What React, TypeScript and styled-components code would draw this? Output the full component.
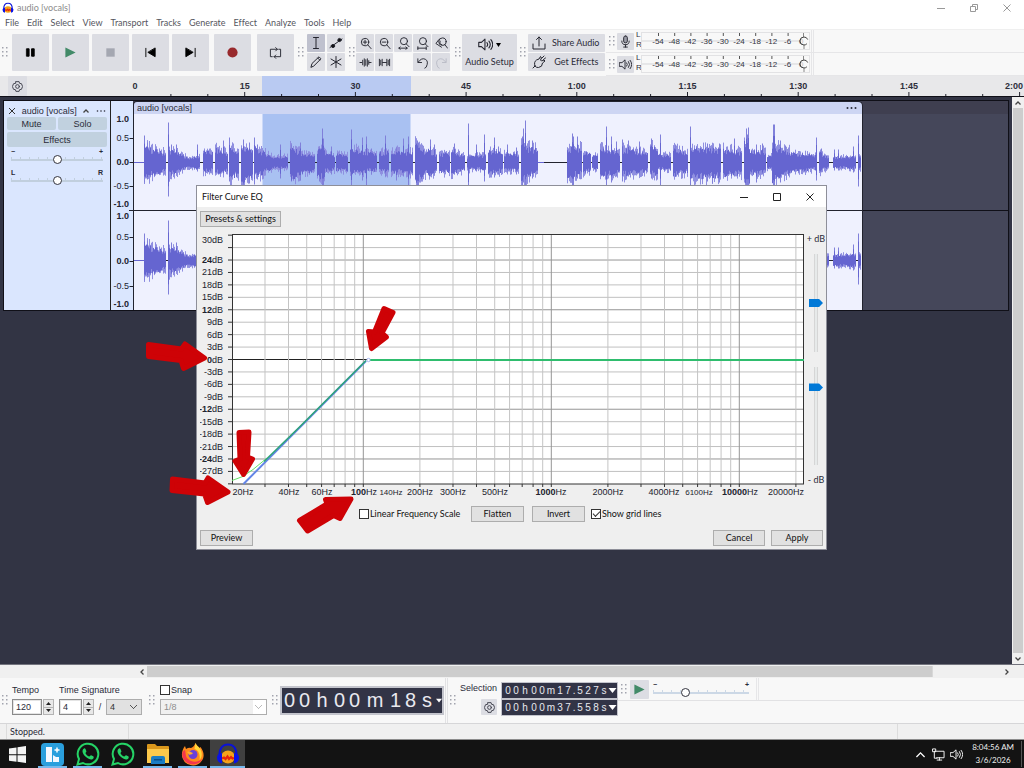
import React from "react";
import styled, { createGlobalStyle, css } from "styled-components";

const sans = `"Liberation Sans", Arial, sans-serif`;
const ui = `Lato, "Open Sans", sans-serif`;

const GlobalStyle = createGlobalStyle`
  * { box-sizing: border-box; }
  body { margin: 0; background: #323444; overflow: hidden; font-variant-ligatures: none; }
  button, input, select { font: inherit; font-variant-ligatures: none; color: inherit; margin: 0; padding: 0; }
  svg { display: block; flex: none; }
`;

/* ---------- shell ---------- */
const Desktop = styled.div`
  position: relative;
  display: flex;
  flex-direction: column;
  height: 100vh;
  font: 9px/12px ${ui};
  font-variant-ligatures: none;
  color: #2a2b38;
`;
const TitleBar = styled.header`
  display: flex;
  align-items: center;
  height: 16px;
  gap: 3px;
  padding: 0 1px 0 2px;
  background: #fff;
  color: #8b8b8b;
`;
const WindowTitle = styled.h1`
  flex: 1;
  margin: 0;
  font-size: 9px;
  font-weight: 400;
`;
const CaptionButtons = styled.div`
  display: flex;
`;
const CaptionButton = styled.button`
  display: grid;
  place-items: center;
  width: 33px;
  height: 16px;
  border: 0;
  background: none;
`;
const MenuBar = styled.nav`
  display: flex;
  gap: 8px;
  height: 13px;
  padding-left: 5px;
  background: #fff;
  color: #55565e;
`;
const MenuItem = styled.a`
  color: inherit;
  text-decoration: none;
  line-height: 14px;
`;

/* ---------- toolbars ---------- */
const ToolBar = styled.div`
  display: flex;
  height: 47px;
  background: #f8f8f8;
  box-shadow: inset 0 1px #efefef;
`;
const ToolGroup = styled.div<{ $gap?: number; $pad?: number }>`
  display: flex;
  align-items: center;
  gap: ${(p) => p.$gap ?? 0}px;
  padding-right: ${(p) => p.$pad ?? 0}px;
`;
const ToolButton = styled.button<{ $w?: number; $h?: number; $on?: boolean; $lead?: number }>`
  display: flex;
  align-items: center;
  justify-content: center;
  flex: none;
  width: ${(p) => p.$w ?? 18}px;
  height: ${(p) => p.$h ?? 18}px;
  margin-left: ${(p) => p.$lead ?? 0}px;
  border: 0;
  border-radius: 1px;
  background: ${(p) => (p.$on ? "#bfc1ce" : "#dcdde3")};
`;
const StackButton = styled(ToolButton)`
  flex-direction: column;
  gap: 4px;
`;
const WideButton = styled(ToolButton)`
  justify-content: flex-start;
  gap: 6px;
  padding-left: 4px;
`;
const ButtonGrid = styled.div<{ $cols: number; $gap: number }>`
  display: grid;
  grid-template-columns: repeat(${(p) => p.$cols}, 18px);
  gap: 1px ${(p) => p.$gap}px;
  padding-right: 3px;
`;
const Column = styled.div`
  display: flex;
  flex-direction: column;
  gap: 1px;
`;
const MeterPanel = styled.div`
  display: flex;
  flex: 1;
  flex-direction: column;
  padding-top: 1px;
`;
const MeterRow = styled.div`
  display: flex;
  align-items: center;
  flex: 1;
  border-bottom: 1px solid #e6e6e8;
`;
const MeterEnd = styled.div`
  align-self: stretch;
  width: 3px;
  border: solid #e6e6e8;
  border-width: 0 1px;
  margin-left: 1px;
`;
const GripBox = styled.span<{ $w?: number }>`
  display: grid;
  place-items: center;
  flex: none;
  width: ${(p) => p.$w ?? 10}px;
`;
const Grip = ({ w }: { w?: number }) => (
  <GripBox $w={w}>
    <svg width="6" height="11" fill="#a2a4ae">
      {[0, 4].map((x) => [0, 4, 8].map((y) => <rect key={`${x}${y}`} x={x} y={y} width="1.5" height="1.5" />))}
    </svg>
  </GripBox>
);

/* ---------- icons ---------- */
const Icon = ({ size = 14, children, fill = "none", stroke = "#24252f", sw = 1 }: {
  size?: number; children: React.ReactNode; fill?: string; stroke?: string; sw?: number;
}) => (
  <svg width={size} height={size} viewBox="0 0 14 14" fill={fill} stroke={stroke} strokeWidth={sw} strokeLinecap="round" strokeLinejoin="round">
    {children}
  </svg>
);
const Gear = () => (
  <Icon size={11} sw={1.2} stroke="#40414c">
    <path d="M5 .8h4l.7 2.200 2.300.4 1.500 3.600-1.500 3.600-2.300.4-.7 2.200H5L4.300 11 2 10.600.5 7 2 3.400 4.300 3z" />
    <circle cx="7" cy="7" r="2.400" />
  </Icon>
);
const Lens = () => (<><circle cx="6.500" cy="5.500" r="4" /><path d="M9.500 8.500l3.500 4" /></>);
const Speaker = ({ size = 14, stroke }: { size?: number; stroke?: string }) => (
  <Icon size={size} stroke={stroke}>
    <path d="M.7 5h2.500L6.500 2v10L3.200 9H.7zM8.300 5.200q1.400 1.800 0 3.600M10.200 3.800q2.500 3.200 0 6.400M12 2.500q3.500 4.500 0 9" />
  </Icon>
);
const AudacityLogo = ({ size }: { size: number }) => (
  <svg width={size} height={size} viewBox="0 0 24 24">
    <path d="M3.500 13C3.500 6 7 2.500 12 2.500S20.500 6 20.500 13" fill="none" stroke="#0a12d8" strokeWidth="2.200" />
    <ellipse cx="12" cy="15" rx="7" ry="6.500" fill="#f5a21a" />
    <path d="M6 16.500l2-1 1.500 1.500 2-2.500 1.500 2.500 2-2 1.500 1.500 1.500-.5" fill="none" stroke="#e8240c" strokeWidth="2.200" />
    <path d="M1 15.500q0-4 5-4.500v10.500q-5-1-5-6zM23 15.500q0-4-5-4.500v10.500q5-1 5-6z" fill="#0a12e8" />
  </svg>
);

const editTools = [
  { name: "Selection tool", on: true, art: <path d="M4.500 1.500h5M7 1.500v11M4.500 12.500h5" /> },
  { name: "Envelope tool", art: <><path d="M1 11.500L13 3M2 10l3 .5M9 4.500l3-.5" /><circle cx="4" cy="10" r="1.600" fill="#111" /><circle cx="10.500" cy="4" r="1.600" fill="#111" /></> },
  { name: "Draw tool", art: <path d="M2 12l1-3.500L10 1.800l2 2-7 7zM8.700 3l2 2" /> },
  { name: "Multi-tool", art: <path d="M7 1.500v11M2 4l10 6M12 4L2 10" /> },
];
const zoomTools = [
  { name: "Zoom in", art: <><Lens /><path d="M4.500 5.500h4M6.500 3.500v4" /></> },
  { name: "Zoom out", art: <><Lens /><path d="M4.500 5.500h4" /></> },
  { name: "Fit selection", art: <><circle cx="7.500" cy="4.500" r="3.800" /><path d="M10 7.500l3 3M2 12h9M3.500 10.700L2 12l1.500 1.300M9.500 10.700L11 12l-1.500 1.300" /></> },
  { name: "Fit project", art: <><circle cx="7.500" cy="4.500" r="3.800" /><path d="M10 7.500l3 3M2 12h9M2 10.500v3M11 10.500v3" /></> },
  { name: "Zoom toggle", art: <><circle cx="8" cy="5" r="4" /><path d="M10.500 8l3 4M4 3L1 7l6 4M5.500 4.500q-1 3 2 4" /></> },
  { name: "Trim", art: <path d="M1 7h2M11 7h2M4 4.500v5M5.700 3v8M7.300 4v6M9 3v8M10.500 5v4" /> },
  { name: "Silence", art: <path d="M5 7h4M1.500 3.500v7M3 4.500v5M4.500 3.500v7M9.500 3.500v7M11 4.500v5M12.500 3.500v7" /> },
  null,
  { name: "Undo", art: <path d="M2 3v4h4M2.500 6.500Q6 1.500 10 3.500t1 8.500l-1.500 1" /> },
  { name: "Redo", off: true, art: <path d="M12 3v4H8M11.500 6.500Q8 1.500 4 3.500t-1 8.500l1.500 1" /> },
];
const transport = [
  { name: "Pause", art: <path d="M3 3h2.500v8H3zM8.500 3H11v8H8.500z" fill="#000" stroke="#000" /> },
  { name: "Play", art: <path d="M1.500 1.500v11l11-5.500z" fill="#428a68" stroke="none" /> },
  { name: "Stop", art: <path d="M2.500 2.500h9v9h-9z" fill="#a4a7b1" stroke="none" /> },
  { name: "Skip to start", art: <path d="M2 2.500v9M12 2.500v9L4.500 7z" fill="#000" stroke="#000" /> },
  { name: "Skip to end", art: <path d="M12 2.500v9M2 2.500v9L9.500 7z" fill="#000" stroke="#000" /> },
  { name: "Record", lead: 2, art: <circle cx="7" cy="7" r="5.500" fill="#98292d" stroke="none" /> },
  { name: "Loop", lead: 3, art: <path d="M3.500 11.500h-2v-8H9M7.200 1.700L9 3.500 7.200 5.300M10.500 3.500h2v8H5.500M7.300 9.700L5.500 11.500l1.800 1.800" /> },
];

/* ---------- level meters ---------- */
const Meter = ({ name, children }: { name: string; children: React.ReactNode }) => (
  <MeterRow>
    <Grip w={11} />
    <ToolButton aria-label={name} $h={17} $w={17}>{children}</ToolButton>
    <svg width="176" height="22" fontFamily={sans} fontSize="8" fill="#33343f">
      <text x="2" y="7">L</text>
      <text x="2" y="17">R</text>
      <rect x="7.500" y="2.500" width="168" height="17" fill="none" stroke="#e2e2e4" />
      <path d="M8 11h160" stroke="#d5d5d8" />
      {[-54, -48, -42, -36, -30, -24, -18, -12, -6].map((v, i) => (
        <g key={v}>
          <path d={`M${24.500 + i * 16.200} 3v3`} stroke="#555" />
          <text x={24 + i * 16.200} y="14" textAnchor="middle">{v}</text>
        </g>
      ))}
      <text x="165" y="14">0</text>
      <path d="M169.500 3v4M170 15v4" stroke="#888" />
      <circle cx="170" cy="11" r="4" fill="#f8f8f8" fillOpacity=".7" stroke="#444" strokeDasharray="20 6" strokeDashoffset="-3" />
    </svg>
    <MeterEnd />
  </MeterRow>
);

/* ---------- time ruler ---------- */
const RulerRow = styled.div`
  display: flex;
  height: 21px;
  padding-left: 8px;
  background: #e8e8ea;
  border-bottom: 1px solid #101018;
`;
const RulerScale = styled.svg`
  flex: 1;
  min-width: 0;
  width: 0;
`;
const STEP = 36.9;
const timeLabels = ["0", "15", "30", "45", "1:00", "1:15", "1:30", "1:45"];
const TimeRuler = () => (
  <RulerRow>
    <ToolButton aria-label="Timeline options" $w={19} $h={20}><Gear /></ToolButton>
    <RulerScale height="20" fontFamily={sans} fontSize="9" fontWeight="700" fill="#2e2f3c">
      <rect x="235" width="149" height="20" fill="#b9caf2" />
      {Array.from({ length: 24 }, (_, i) => (
        <path key={i} d={`M${107 + (i + 1) * STEP} ${(i + 1) % 3 ? 18 : 16}v4`} stroke="#22232e" />
      ))}
      {timeLabels.map((t, i) => (
        <text key={t} x={i ? 107 + i * STEP * 3 : 108} y="13" textAnchor="middle">{t}</text>
      ))}
      <text x="996" y="13" textAnchor="end">2:00</text>
    </RulerScale>
  </RulerRow>
);

/* ---------- tracks ---------- */
const Workspace = styled.main`
  display: flex;
  flex: 1;
  min-height: 0;
  background: #323444;
`;
const TrackList = styled.div`
  flex: 1;
  min-width: 0;
  padding: 3px 3px 0;
`;
const Track = styled.section`
  display: flex;
  border: 1px solid #101018;
  height: 211px;
`;
const TrackPanel = styled.div`
  width: 107px;
  flex: none;
  padding: 3px 3px 0;
  background: #dae6fe;
  border-right: 1px solid #222;
  font: 9px/12px ${sans};
`;
const PanelTitle = styled.div`
  display: flex;
  align-items: center;
  justify-content: space-between;
  height: 13px;
  padding: 0 1px;
`;
const PanelRow = styled.div`
  display: flex;
  gap: 2px;
  margin-bottom: 2px;
`;
const PanelButton = styled.button<{ $h: number }>`
  flex: 1;
  height: ${(p) => p.$h}px;
  border: 0;
  border-radius: 2px;
  background: #c1d1df;
`;
const KnobLabels = styled.span`
  display: flex;
  justify-content: space-between;
  height: 6px;
  padding: 0 4px;
  font: 700 7px/6px ${sans};
`;
const Knob = styled.label`
  display: block;
  height: 21px;
`;
const Range = styled.input<{ $line: string }>`
  appearance: none;
  display: block;
  width: calc(100% - 8px);
  height: 9px;
  margin: 0 4px;
  background: linear-gradient(${(p) => p.$line}, ${(p) => p.$line}) 0 4px / 100% 2px no-repeat,
    repeating-linear-gradient(90deg, ${(p) => p.$line} 0 1px, transparent 1px 9px) 0 2px / 100% 2px no-repeat;
  &::-webkit-slider-thumb {
    appearance: none;
    width: 9px;
    height: 9px;
    border: 1px solid #33343f;
    border-radius: 50%;
    background: #fff;
  }
`;
const ClipArea = styled.div`
  flex: 1;
  min-width: 0;
  background: linear-gradient(#101018, #101018) 0 109px / 100% 1px no-repeat,
    linear-gradient(#3f3f50 13px, #45475a 13px);
`;
const Clip = styled.div`
  width: 730px;
  border: 1px solid #22232e;
  border-width: 1px 1px 0;
  border-radius: 4px 5px 0 0;
  overflow: hidden;
`;
const ClipHeader = styled.div`
  display: flex;
  justify-content: space-between;
  height: 12px;
  padding: 0 5px 0 3px;
  background: #cdd5f3;
  font: 9px/12px ${sans};
`;
const LowerChannel = styled.div`
  border-top: 1px solid #22232e;
`;
const Dots = ({ w = 11, r = 1 }: { w?: number; r?: number }) => (
  <svg width={w} height="11" fill="#2a2b38">
    {[0, 1, 2].map((i) => <circle key={i} cx={1.500 + i * (w - 3) / 2} cy="6" r={r} />)}
  </svg>
);

/* voiced passages: start, end, height above and below the axis at the start, then at the end */
const phrases = [
  [144, 166, 15, 15, 9, 8], [168, 187, 13, 13, 5, 5], [187, 200, 4, 5, 6, 6], [203, 213, 11, 9, 10, 8],
  [215, 228, 13, 11, 9, 9], [229, 239, 14, 17, 10, 11], [241, 253, 14, 20, 12, 14], [254, 272, 14, 15, 6, 6],
  [272, 288, 5, 6, 6, 6], [290, 301, 14, 16, 10, 13], [301, 315, 8, 10, 7, 9], [317, 325, 12, 14, 13, 16],
  [325, 335, 9, 9, 6, 7], [336, 348, 8, 8, 7, 8], [350, 377, 13, 11, 8, 8], [379, 389, 10, 9, 10, 10],
  [391, 413, 11, 10, 10, 10], [415, 428, 18, 19, 9, 9], [428, 437, 12, 13, 8, 9], [439, 450, 8, 9, 9, 10],
  [451, 465, 11, 11, 6, 7], [467, 486, 6, 7, 7, 7], [488, 503, 11, 11, 9, 9], [504, 519, 8, 8, 8, 8],
  [521, 538, 16, 18, 12, 8], [567, 582, 14, 16, 14, 10], [583, 591, 10, 10, 8, 8], [592, 598, 7, 7, 6, 6],
  [600, 620, 13, 13, 10, 10], [622, 648, 13, 13, 9, 8], [650, 658, 16, 13, 12, 11], [658, 671, 7, 7, 7, 7],
  [673, 688, 13, 13, 9, 9], [690, 721, 13, 15, 13, 14], [723, 742, 13, 13, 10, 11], [744, 750, 20, 21, 14, 18],
  [750, 766, 11, 11, 11, 10], [767, 772, 6, 6, 6, 6], [772, 790, 16, 18, 11, 10], [790, 817, 9, 9, 7, 7],
  [819, 829, 10, 9, 5, 5], [833, 856, 5, 5, 6, 6], [858, 861, 7, 8, 5, 5],
];
/* transient peaks: position, above, below */
const peaks = [
  [144, 27, 20], [147, 20, 17], [168, 40, 34], [171, 18, 12], [176, 18, 11], [197, 18, 9], [223, 22, 12],
  [229, 25, 19], [243, 23, 23], [249, 20, 21], [254, 25, 22], [257, 18, 17], [280, 18, 16], [291, 18, 19],
  [300, 20, 18], [319, 15, 19], [322, 34, 23], [323, 24, 23], [331, 16, 12], [351, 33, 25], [362, 25, 18],
  [366, 26, 23], [371, 14, 12], [385, 27, 14], [396, 15, 18], [403, 24, 14], [408, 26, 23], [417, 22, 23],
  [418, 20, 23], [430, 23, 14], [434, 18, 12], [454, 19, 12], [468, 39, 28], [476, 18, 9], [484, 28, 19],
  [494, 25, 15], [498, 16, 12], [507, 18, 10], [516, 15, 12], [522, 26, 23], [523, 34, 20], [525, 42, 24],
  [532, 22, 16], [572, 29, 23], [573, 26, 23], [577, 26, 16], [606, 36, 24], [611, 26, 20], [616, 21, 14],
  [622, 23, 19], [628, 22, 14], [639, 21, 13], [651, 24, 16], [660, 28, 23], [675, 18, 14], [690, 36, 23],
  [707, 19, 19], [712, 16, 21], [719, 19, 20], [734, 24, 14], [746, 34, 24], [747, 28, 24], [748, 35, 24],
  [756, 18, 20], [762, 19, 12], [773, 38, 25], [774, 38, 25], [780, 22, 20], [785, 17, 13], [816, 25, 18],
  [821, 14, 9], [834, 13, 8], [838, 13, 8], [853, 16, 10], [858, 27, 24],
];
const CLIP_X = 134;
const noise = (n: number) => {
  const s = Math.sin(n * 12.9898) * 43758.5453;
  return s - Math.floor(s);
};
const barsPath = (axis: number, floor: number, spread: number, seed: number) =>
  phrases.map(([a, b, u0, d0, u1, d1]) => {
    let out = "";
    for (let x = a; x < b; x++) {
      const t = (x - a) / (b - a);
      const up = (u0 + (u1 - u0) * t) * (floor + spread * noise(x + seed));
      const down = (d0 + (d1 - d0) * t) * (floor + spread * noise(x + seed + 500));
      out += `M${x - CLIP_X + 0.5} ${(axis - up).toFixed(1)}v${(up + down).toFixed(1)}`;
    }
    return out;
  }).join("");
const peakPath = (axis: number, k: number) =>
  peaks.map(([x, u, d]) => `M${x - CLIP_X + 0.5} ${axis - u * k}v${(u + d) * k}`).join("");

const Channel = ({ axis, height }: { axis: number; height: number }) => (
  <svg width="728" height={height}>
    <rect width="728" height={height} fill="#eff1fe" />
    <rect x="128.500" width="148" height={height} fill="#a9c1f2" />
    <path d={`M10 ${axis}h717`} stroke="#22232e" />
    <path d={`M0 ${axis}h10M404 ${axis}h6`} stroke="#6565d0" />
    <path d={barsPath(axis, 0.8, 0.8, 31)} stroke="#8f8fe0" />
    <path d={peakPath(axis, 1)} stroke="#8080da" />
    <path d={barsPath(axis, 0.65, 0.5, 0) + peakPath(axis, 0.7)} stroke="#6565d0" />
  </svg>
);
const levels: [string, number, boolean][] = [
  ["1.0", 18, true], ["0.5", 37, false], ["0.0", 61, true], ["-0.5", 85, false], ["-1.0", 103, true],
  ["1.0", 115, true], ["0.5", 136, false], ["0.0", 160, true], ["-0.5", 185, false], ["-1.0", 203, true],
];
const LevelRuler = () => (
  <svg width="22" height="209" fontFamily={sans} fontSize="9" fill="#22232e">
    <rect width="22" height="209" fill="#dae6fe" />
    {levels.map(([t, y, b], i) => (
      <g key={i}>
        <text x="18" y={y + 3} textAnchor="end" fontWeight={b ? 700 : 400}>{t}</text>
        {t.endsWith("1.0") || <path d={`M18.500 ${y + 0.5}h4`} stroke="#22232e" />}
      </g>
    ))}
    <path d="M18 109.500h4" stroke="#22232e" />
  </svg>
);

/* ---------- scroll bars ---------- */
const VScroll = styled.div`
  display: flex;
  flex-direction: column;
  align-items: center;
  width: 12px;
  background: #f0f0f0;
`;
const VThumb = styled.div`
  flex: 1;
  width: 10px;
  margin: 0 1px;
  background: #cdcdcd;
`;
const HScroll = styled.div`
  display: flex;
  align-items: center;
  height: 14px;
  padding-left: 136px;
  border-top: 1px solid #73747e;
  background: #f0f0f0;
`;
const HRail = styled.div`
  flex: 1;
  height: 11px;
  background: linear-gradient(#cdcdcd, #cdcdcd) 0 0 / 92% 100% no-repeat;
`;
const ScrollArrow = styled.button`
  display: grid;
  place-items: center;
  width: 11px;
  height: 11px;
  border: 0;
  background: none;
`;
const Chevron = ({ turn, size = 8, stroke = "#444", sw = 1.3 }: { turn: number; size?: number; stroke?: string; sw?: number }) => (
  <svg width={size} height={size} viewBox="0 0 8 8" fill="none" stroke={stroke} strokeWidth={sw}>
    <path d="M1.500 5.500L4 3l2.500 2.500" transform={`rotate(${turn} 4 4)`} />
  </svg>
);

/* ---------- bottom toolbar ---------- */
const BottomBar = styled.div`
  display: flex;
  height: 46px;
  background: #f8f8f8;
  border-bottom: 1px solid #d6d6d8;
  font: 9px/12px ${sans};
`;
const Field = styled.div<{ $pad?: number }>`
  display: flex;
  flex-direction: column;
  gap: 3px;
  padding: 6px ${(p) => p.$pad ?? 3}px 0 2px;
`;
const FieldRow = styled.div`
  display: flex;
  align-items: center;
  gap: 1px;
`;
const TextBox = styled.input<{ $w: number }>`
  width: ${(p) => p.$w}px;
  height: 16px;
  padding: 0 3px;
  border: 1px solid #8a8a8a;
  background: #fff;
  outline: 1px solid #e4e4e4;
  outline-offset: -2px;
`;
const Spin = styled.span`
  display: flex;
  flex-direction: column;
  width: 11px;
  height: 16px;
  border: 1px solid #b4b4b4;
  background: #e8e8e8;
`;
const SpinButton = styled.button`
  display: grid;
  place-items: center;
  flex: 1;
  border: 0;
  background: none;
  &:first-child { border-bottom: 1px solid #b4b4b4; }
`;
const Stepper = () => (
  <Spin>
    {["Increase", "Decrease"].map((n, i) => (
      <SpinButton key={n} aria-label={n}>
        <svg width="5" height="3"><path d={i ? "M0 0h5L2.500 3z" : "M0 3h5L2.500 0z"} fill="#222" /></svg>
      </SpinButton>
    ))}
  </Spin>
);
const chevronDown = (c: string) =>
  `linear-gradient(45deg, transparent 46%, ${c} 46% 60%, transparent 60%) right 7px center / 4px 4px no-repeat,
   linear-gradient(-45deg, transparent 46%, ${c} 46% 60%, transparent 60%) right 4px center / 4px 4px no-repeat`;
const Select = styled.select<{ $w: number; $dim?: boolean }>`
  appearance: none;
  width: ${(p) => p.$w}px;
  height: 16px;
  padding-left: 3px;
  border: 1px solid #adadad;
  border-radius: 0;
  color: ${(p) => (p.$dim ? "#8d8d8d" : "#333")};
  opacity: 1;
  background: ${(p) => (p.$dim ? `${chevronDown("#bbb")}, linear-gradient(90deg, #f0f0f0 92px, #fff 92px)` : `${chevronDown("#555")}, #e1e1e1`)};
`;
const CheckLabel = styled.label`
  display: flex;
  align-items: center;
  gap: 1px;
`;
const Check = styled.input`
  appearance: none;
  display: grid;
  place-items: center;
  width: 10px;
  height: 10px;
  border: 1px solid #333;
  background: #fff;
  &:checked::after {
    content: "";
    width: 6px;
    height: 3px;
    border: solid #333;
    border-width: 0 0 1px 1px;
    transform: rotate(-45deg);
    margin-bottom: 2px;
  }
`;
const TimeField = styled.div<{ $big?: boolean }>`
  display: flex;
  align-items: center;
  flex: none;
  border: 1px solid #c3c4cc;
  background: #323446;
  color: #e9e9ef;
  ${(p) => p.$big
    ? css`height: 29px; align-self: center; font: 20px/27px ${sans}; border-width: 2px;`
    : css`height: 17px; padding-left: 2px; font: 10px/15px ${sans};`}
`;
const Cell = styled.span<{ $w: number }>`
  width: ${(p) => p.$w}px;
  text-align: center;
`;
const bigCells: Record<string, number> = { h: 20, m: 26, s: 18 };
const smallCells: Record<string, number> = { h: 10, m: 10, s: 8, ".": 4 };
const TimeCells = ({ value, big }: { value: string; big?: boolean }) => (
  <TimeField $big={big}>
    {[...value].map((c, i) => (
      <Cell key={i} $w={big ? bigCells[c] ?? 15 : smallCells[c] ?? 8}>{c}</Cell>
    ))}
    <svg width={big ? 6 : 9} height="5" viewBox="0 0 8 5"><path d="M0 0h8L4 5z" fill="#fff" /></svg>
  </TimeField>
);
const Separator = styled.span`
  width: 3px;
  margin-left: 1px;
  border: solid #e2e2e4;
  border-width: 0 1px;
`;
const SelectionBox = styled.div`
  display: grid;
  grid-template-columns: auto auto;
  grid-template-rows: 17px 17px;
  align-content: start;
  justify-items: end;
  column-gap: 4px;
  padding: 4px 0 0 2px;
`;
const SpeedPanel = styled.div`
  flex: 1;
  align-self: flex-start;
  display: flex;
  align-items: center;
  height: 23px;
  border-bottom: 1px solid #e2e2e4;
`;
const SpeedRange = styled.label`
  width: 104px;
  margin-right: 2px;
`;
const StatusBar = styled.footer`
  display: flex;
  height: 16px;
  padding-left: 6px;
  background: #f0f0f0;
  line-height: 16px;
  border-bottom: 1px solid #8c8c8c;
`;
const StatusCell = styled.span<{ $flex?: string }>`
  flex: ${(p) => p.$flex ?? "1"};
  padding-left: 3px;
  border-left: 1px solid #dcdcdc;
`;

/* ---------- task bar ---------- */
const TaskBar = styled.nav`
  display: flex;
  align-items: stretch;
  height: 28px;
  background: #131313;
  color: #eee;
`;
const Task = styled.button<{ $open?: boolean; $active?: boolean }>`
  display: grid;
  place-items: center;
  width: 35px;
  border: 0;
  background: ${(p) => (p.$open ? `linear-gradient(#76b9ed, #76b9ed) center bottom / ${p.$active ? 35 : 29}px 2px no-repeat` : "none")};
  background-color: ${(p) => (p.$active ? "#404040" : "transparent")};
`;
const Tray = styled.div`
  display: flex;
  align-items: center;
  gap: 5px;
  margin-left: auto;
  padding-right: 2px;
`;
const Clock = styled.time`
  display: block;
  text-align: center;
  font-size: 8px;
  line-height: 13px;
  padding: 0 7px 0 4px;
  border-right: 1px solid #555;
`;
const WhatsApp = () => (
  <svg width="24" height="24" viewBox="0 0 24 24">
    <path d="M1.500 22.500L3 17A10.300 10.300 0 1 1 7 21z" fill="#131313" stroke="#25d366" strokeWidth="2" />
    <path d="M8 6.500c-3 2-1 6 2 8.500s6 3.500 7.500 1.200c.6-1.200 0-1.700-.8-2.100l-1.600-.8c-.8-.3-1.200 1.400-2 1.200-1.500-.5-3-2-3.600-3.300-.2-.7 1.200-1 .9-1.900L9.500 7c-.4-.7-1-.8-1.500-.5z" fill="#25d366" />
  </svg>
);
const tasks = [
  { name: "Start", art: <svg width="17" height="17" fill="#f4f4f4"><path d="M0 2.500l7.500-1v6.700H0zM8.500 1.300L17 0v8.200H8.500zM0 9.200h7.500v6.600L0 14.800zM8.500 9.200H17V17l-8.500-1.200z" /></svg> },
  { name: "Launcher", open: true, art: <svg width="23" height="23"><rect width="23" height="23" rx="4" fill="#2a9fdd" /><path d="M5 4h6v15H5z" fill="#f5f8ff" /><path d="M12 12l3 2h3v5h-6z" fill="#f5f8ff" /><path d="M16 4.500v5M13.500 7h5" stroke="#fff" strokeWidth="1.500" /></svg> },
  { name: "WhatsApp", open: true, art: <WhatsApp /> },
  { name: "WhatsApp Business", art: <WhatsApp /> },
  { name: "Files", open: true, art: <svg width="24" height="22"><path d="M1 2q0-1 1-1h7l2 2h11q1 0 1 1v4H1z" fill="#d9971c" /><path d="M1 6h22v14H1z" fill="#fcc94b" /><path d="M5 21v-6q0-2 2-2h10q2 0 2 2v6z" fill="#1a7dc4" /><path d="M8 16h8v1.500H8z" fill="#0b4f8a" /></svg> },
  { name: "Firefox", open: true, art: <svg width="24" height="24" viewBox="0 0 24 24"><path d="M14.500 1c1 3 3 3.500 4 5l1-1c3 4 4.500 9 1.500 13.500A11 11 0 0 1 1.500 16C0 12 1.500 7 4 4l1 3q3-2 5-1 3-1 4.500-5z" fill="#ff8a1c" /><path d="M14.500 1c1 3 3 3.500 4 5 3 4 3 9 0 12 1-5-1-10-5-11z" fill="#ffd83a" /><path d="M1.200 12c0 6 5 10.500 11 10.500 4 0 8-2.500 9.500-6-4 4-11 4-14 1C4 15 5 11 4 8c-2 1-2.800 2-2.800 4z" fill="#f4364c" /><circle cx="12" cy="12.500" r="4.500" fill="#6b3fd8" /><path d="M6 10c3-1 3 0 6 1-1 2-3 1-3.500 2z" fill="#ffae2b" /></svg> },
  { name: "Audacity", open: true, active: true, art: <AudacityLogo size={24} /> },
];

/* ---------- Filter Curve dialog ---------- */
const Dialog = styled.section`
  position: absolute;
  left: 196px;
  top: 185px;
  width: 631px;
  background: #efefef;
  border: 1px solid #8e8f99;
`;
const DialogTitle = styled.header`
  display: flex;
  align-items: center;
  height: 21px;
  padding-left: 5px;
  background: #fff;
  color: #111;
`;
const DialogBody = styled.div`
  padding: 4px 0 3px 3px;
`;
const PushButton = styled.button<{ $w: number }>`
  width: ${(p) => p.$w}px;
  height: 16px;
  border: 1px solid #adadad;
  background: #e1e1e1;
  color: #111;
`;
const PlotRow = styled.div`
  display: flex;
  margin-top: 3px;
`;
const GainColumn = styled.div`
  display: flex;
  flex-direction: column;
  align-items: center;
  gap: 3px;
  width: 20px;
  padding-top: 3px;
  white-space: nowrap;
`;
const Gain = styled.input`
  appearance: none;
  writing-mode: vertical-lr;
  direction: rtl;
  width: 14px;
  height: 110px;
  margin: 0;
  background: linear-gradient(90deg, transparent 5px, #d6d6d6 5px 6px, #e7eaea 6px 8px, #d6d6d6 8px 9px, transparent 9px)
    0 6px / 100% 98px no-repeat;
  &::-webkit-slider-thumb {
    appearance: none;
    width: 14px;
    height: 8px;
    background: #0078d7;
    clip-path: polygon(0 0, 72% 0, 100% 50%, 72% 100%, 0 100%);
  }
`;
const OptionRow = styled.div`
  display: grid;
  grid-template-columns: 104px 53px 51px auto;
  align-items: center;
  column-gap: 8px;
  margin-top: 6px;
  padding-left: 159px;
  color: #111;
`;
const ActionRow = styled.div`
  display: flex;
  gap: 6px;
  margin-top: 8px;
  padding-right: 3px;
`;
const Spacer = styled.span`
  flex: 1;
`;
const fx = (hz: number) => 163.300 + 188 * Math.log10(hz / 100);
const dy = (db: number) => 129.500 - db * 4.145;
const freqs = [1, 10, 100].flatMap((k) => [2, 3, 4, 5, 6, 7, 8, 9, 10].map((n) => n * k * 10)).concat(20000).filter((f) => f > 20);
const gains = Array.from({ length: 20 }, (_, i) => 30 - i * 3);
const freqLabels: [string, number, boolean?, boolean?][] = [
  ["20", 43], ["40", 89], ["60", 122], ["100", 164, true], ["140", 191, false, true], ["200", 220], ["300", 253],
  ["500", 295], ["1000", 351, true], ["2000", 408], ["4000", 464], ["6100", 499, false, true], ["10000", 540, true], ["20000", 586],
];
const Plot = () => (
  <svg width="606" height="270" fontFamily={sans} fontSize="9" fill="#22232e">
    <rect x="32" y="5" width="572" height="249" fill="#fff" />
    {gains.filter((g) => g < 30).map((g) => (
      <path key={g} d={`M32 ${dy(g)}h572`} stroke={g === 0 ? "#222" : g % 12 ? "#c0c0c0" : "#959595"} />
    ))}
    {freqs.map((f) => (
      <path key={f} d={`M${fx(f)} 5v249`} stroke={[100, 1000, 10000].includes(f) ? "#959595" : "#c4c4c4"} />
    ))}
    {freqs.map((f) => <path key={f} d={`M${fx(f)} 254v3`} stroke="#333" />)}
    {gains.concat(-30).map((g) => <path key={g} d={`M28 ${dy(g)}h4`} stroke="#333" />)}
    <rect x="32.500" y="4.500" width="571" height="249.500" fill="none" stroke="#333" />
    {gains.filter((g) => g !== 27).map((g) => (
      <text key={g} x="23" y={g === 30 ? 13 : dy(g) + 3} textAnchor="end">
        <tspan fontWeight={g % 12 ? 400 : 700}>{g}</tspan>dB
      </text>
    ))}
    {freqLabels.map(([t, x, bold, small]) => (
      <text key={t} x={x} y="265" textAnchor="middle" fontSize={small ? 8 : 9}>
        <tspan fontWeight={bold ? 700 : 400}>{t}</tspan>Hz
      </text>
    ))}
    <path d="M43.500 254L166 131" stroke="#6385e6" strokeWidth="2" fill="none" />
    <path d="M32 250.500q11-2.500 21-11L67 228" stroke="#66e066" fill="none" />
    <path d="M64 231.500L100 196.500 166 130.500" stroke="#2fa577" strokeWidth="1.500" fill="none" />
    <path d="M169 130h435" stroke="#2fbd6e" strokeWidth="2" />
    <circle cx="168.500" cy="130" r="1.700" fill="#fff" stroke="#8fa4ea" strokeWidth=".8" />
  </svg>
);

/* ---------- annotation arrows ---------- */
const Annotations = styled.svg`
  position: absolute;
  inset: 0;
  width: 100%;
  height: 100%;
  pointer-events: none;
`;
const arrows = [
  "384 308.500L393 312.500 382 333 386.500 337 371.500 348.500 368.500 331.500 374.500 332z",
  "148.500 344.500L181.500 349 185 344 204.500 358 183.500 368.500 181 360.500 148.500 356.500z",
  "172.500 479L205 483 208 478 228 492 207.500 502.500 204.500 494 172 490.500z",
  "239 432.500L249 432 247.500 457 252.500 459 243.500 474.500 235 461 240 459z",
  "299.500 520.500L327 504 325.500 499.500 351 499 340 518.500 333.500 515.500 307.500 531z",
];

export default function App() {
  return (
    <Desktop>
      <GlobalStyle />
      <TitleBar>
        <AudacityLogo size={12} />
        <WindowTitle>audio [vocals]</WindowTitle>
        <CaptionButtons>
          <CaptionButton aria-label="Minimize"><svg width="8" height="8"><path d="M0 4.500h8" stroke="#999" /></svg></CaptionButton>
          <CaptionButton aria-label="Restore"><svg width="8" height="8" fill="none" stroke="#999"><path d="M.5 2.500h5v5h-5zM2.500 2V.5h5v5H6" /></svg></CaptionButton>
          <CaptionButton aria-label="Close"><svg width="8" height="8" stroke="#999"><path d="M.5.500l7 7M7.500.500l-7 7" /></svg></CaptionButton>
        </CaptionButtons>
      </TitleBar>
      <MenuBar>
        {["File", "Edit", "Select", "View", "Transport", "Tracks", "Generate", "Effect", "Analyze", "Tools", "Help"].map((m) => (
          <MenuItem key={m} href="#">{m}</MenuItem>
        ))}
      </MenuBar>

      <ToolBar>
        <ToolGroup $gap={3} $pad={2}>
          <Grip w={9} />
          {transport.map((t) => (
            <ToolButton key={t.name} aria-label={t.name} $w={37} $h={37} $lead={t.lead}><Icon size={13}>{t.art}</Icon></ToolButton>
          ))}
        </ToolGroup>
        <ToolGroup $gap={1}>
          <Grip />
          <ButtonGrid $cols={2} $gap={2}>
            {editTools.map((t) => <ToolButton key={t.name} aria-label={t.name} $on={t.on}><Icon>{t.art}</Icon></ToolButton>)}
          </ButtonGrid>
        </ToolGroup>
        <ToolGroup>
          <Grip w={8} />
          <ButtonGrid $cols={5} $gap={1}>
            {zoomTools.map((t, i) => t
              ? <ToolButton key={i} aria-label={t.name}><Icon size={13} stroke={t.off ? "#b9bbc6" : undefined}>{t.art}</Icon></ToolButton>
              : <span key={i} />)}
          </ButtonGrid>
        </ToolGroup>
        <ToolGroup $pad={1}>
          <Grip w={9} />
          <StackButton $w={55} $h={37}>
            <ToolGroup $gap={3}><Speaker size={15} /><svg width="5" height="4"><path d="M0 0h5L2.500 4z" /></svg></ToolGroup>
            Audio Setup
          </StackButton>
        </ToolGroup>
        <ToolGroup $pad={1}>
          <Grip />
          <Column>
            <WideButton $w={77}><Icon><path d="M1 8v5h12V8M7 10V1M4.500 3.500L7 1l2.500 2.500" /></Icon>Share Audio</WideButton>
            <WideButton $w={77}><Icon><path d="M1 13l2-2M3 11q-1.500-4 1.500-6L7 4l1.500-2.500L9.500 3 8.500 5l1 1 2.500-1 1 1L10.500 8q0 4-4 4.500Q4.500 13 3 11zM10 3l2-2M11.500 4.500l2-1.500" /></Icon>&nbsp;Get Effects</WideButton>
          </Column>
        </ToolGroup>
        <MeterPanel>
          <Meter name="Record meter"><Icon size={13}><rect x="5" y="1" width="4" height="7.500" rx="2" fill="#9b9da8" /><path d="M3 6.500q0 4 4 4t4-4M7 10.500v2.500M5 13h4" /></Icon></Meter>
          <Meter name="Playback meter"><Speaker size={13} /></Meter>
        </MeterPanel>
      </ToolBar>

      <TimeRuler />

      <Workspace>
        <TrackList>
          <Track>
            <TrackPanel>
              <PanelTitle>
                <svg width="8" height="8" stroke="#333"><path d="M1 1l6 6M7 1L1 7" /></svg>
                audio [vocals]
                <Chevron turn={0} /><Dots w={10} r={0.800} />
              </PanelTitle>
              <PanelRow><PanelButton $h={13}>Mute</PanelButton><PanelButton $h={13}>Solo</PanelButton></PanelRow>
              <PanelRow><PanelButton $h={15}>Effects</PanelButton></PanelRow>
              <Knob><KnobLabels><span>−</span><span>+</span></KnobLabels><Range type="range" aria-label="Volume" $line="#c1cfde" /></Knob>
              <Knob><KnobLabels><span>L</span><span>R</span></KnobLabels><Range type="range" aria-label="Pan" $line="#c1cfde" /></Knob>
            </TrackPanel>
            <LevelRuler />
            <ClipArea>
              <Clip>
                <ClipHeader>audio [vocals]<Dots /></ClipHeader>
                <Channel axis={48.500} height={96} />
                <LowerChannel><Channel axis={49.500} height={99} /></LowerChannel>
              </Clip>
            </ClipArea>
          </Track>
        </TrackList>
        <VScroll>
          <ScrollArrow aria-label="Scroll up"><Chevron turn={0} /></ScrollArrow>
          <VThumb />
          <ScrollArrow aria-label="Scroll down"><Chevron turn={180} /></ScrollArrow>
        </VScroll>
      </Workspace>
      <HScroll>
        <ScrollArrow aria-label="Scroll left"><Chevron turn={-90} /></ScrollArrow>
        <HRail />
        <ScrollArrow aria-label="Scroll right"><Chevron turn={90} /></ScrollArrow>
        <GripBox $w={12} />
      </HScroll>

      <BottomBar>
        <Grip />
        <Field>
          <label htmlFor="tempo">Tempo</label>
          <FieldRow><TextBox id="tempo" $w={30} defaultValue="120" /><Stepper /></FieldRow>
        </Field>
        <Field $pad={4}>
          <label htmlFor="beats">Time Signature</label>
          <FieldRow>
            <TextBox id="beats" $w={23} defaultValue="4" /><Stepper />
            <Cell $w={10}>/</Cell>
            <Select aria-label="Beat unit" $w={36} defaultValue="4"><option>4</option></Select>
          </FieldRow>
        </Field>
        <Grip w={12} />
        <Field>
          <CheckLabel><Check type="checkbox" />Snap</CheckLabel>
          <Select aria-label="Snap to" $w={107} $dim disabled defaultValue="1/8"><option>1/8</option></Select>
        </Field>
        <Grip />
        <TimeCells big value="00h00m18s" />
        <Separator />
        <Grip />
        <SelectionBox>
          <span>Selection</span><TimeCells value="00h00m17.527s" />
          <ToolButton aria-label="Selection options" $w={16} $h={16}><Gear /></ToolButton><TimeCells value="00h00m37.558s" />
        </SelectionBox>
        <SpeedPanel>
          <Grip w={12} />
          <ToolButton aria-label="Play at speed" $w={19} $h={19}><Icon size={13}><path d="M1.500 1.500v11l11-5.500z" fill="#428a68" stroke="none" /></Icon></ToolButton>
          <SpeedRange><KnobLabels><span>−</span><span>+</span></KnobLabels><Range type="range" aria-label="Playback speed" defaultValue={32} $line="#ccd8e6" /></SpeedRange>
          <MeterEnd />
        </SpeedPanel>
      </BottomBar>
      <StatusBar>
        <StatusCell $flex="0 0 122px">Stopped.</StatusCell>
        <StatusCell />
        <StatusCell $flex="0 0 127px" />
      </StatusBar>
      <TaskBar>
        {tasks.map((t) => <Task key={t.name} aria-label={t.name} $open={t.open} $active={t.active}>{t.art}</Task>)}
        <Tray>
          <Chevron turn={0} size={13} stroke="#fff" sw={0.8} />
          <Icon size={13} stroke="#fff"><path d="M3 3.500h10v7H5M8 10.500v2.500M5.500 13h5M1 1h3v3H1zM2.500 4v7h3" /></Icon>
          <Speaker size={13} stroke="#fff" />
          <Clock>8:04:56 AM<br />3/6/2026</Clock>
        </Tray>
      </TaskBar>

      <Dialog role="dialog" aria-label="Filter Curve EQ">
        <DialogTitle>
          <WindowTitle>Filter Curve EQ</WindowTitle>
          <CaptionButtons>
            <CaptionButton aria-label="Minimize"><svg width="8" height="8"><path d="M0 4.500h8" stroke="#222" /></svg></CaptionButton>
            <CaptionButton aria-label="Maximize"><svg width="8" height="8"><path d="M.5.500h7v7h-7z" fill="none" stroke="#222" /></svg></CaptionButton>
            <CaptionButton aria-label="Close"><svg width="8" height="8" stroke="#222"><path d="M.5.500l7 7M7.500.500l-7 7" /></svg></CaptionButton>
          </CaptionButtons>
        </DialogTitle>
        <DialogBody>
          <PushButton $w={81}>Presets &amp; settings</PushButton>
          <PlotRow>
            <Plot />
            <GainColumn>
              <span>+ dB</span>
              <Gain type="range" aria-label="Maximum dB" defaultValue={50} />
              <Gain type="range" aria-label="Minimum dB" defaultValue={78} />
              <span>- dB</span>
            </GainColumn>
          </PlotRow>
          <OptionRow>
            <CheckLabel><Check type="checkbox" />Linear Frequency Scale</CheckLabel>
            <PushButton $w={53}>Flatten</PushButton>
            <PushButton $w={53}>Invert</PushButton>
            <CheckLabel><Check type="checkbox" defaultChecked />Show grid lines</CheckLabel>
          </OptionRow>
          <ActionRow>
            <PushButton $w={53}>Preview</PushButton>
            <Spacer />
            <PushButton $w={52}>Cancel</PushButton>
            <PushButton $w={52}>Apply</PushButton>
          </ActionRow>
        </DialogBody>
      </Dialog>
      <Annotations aria-hidden="true" fill="#ce0206" stroke="#ce0206" strokeWidth="5" strokeLinejoin="round">
        {arrows.map((d) => <path key={d} d={`M${d}`} />)}
      </Annotations>
    </Desktop>
  );
}
